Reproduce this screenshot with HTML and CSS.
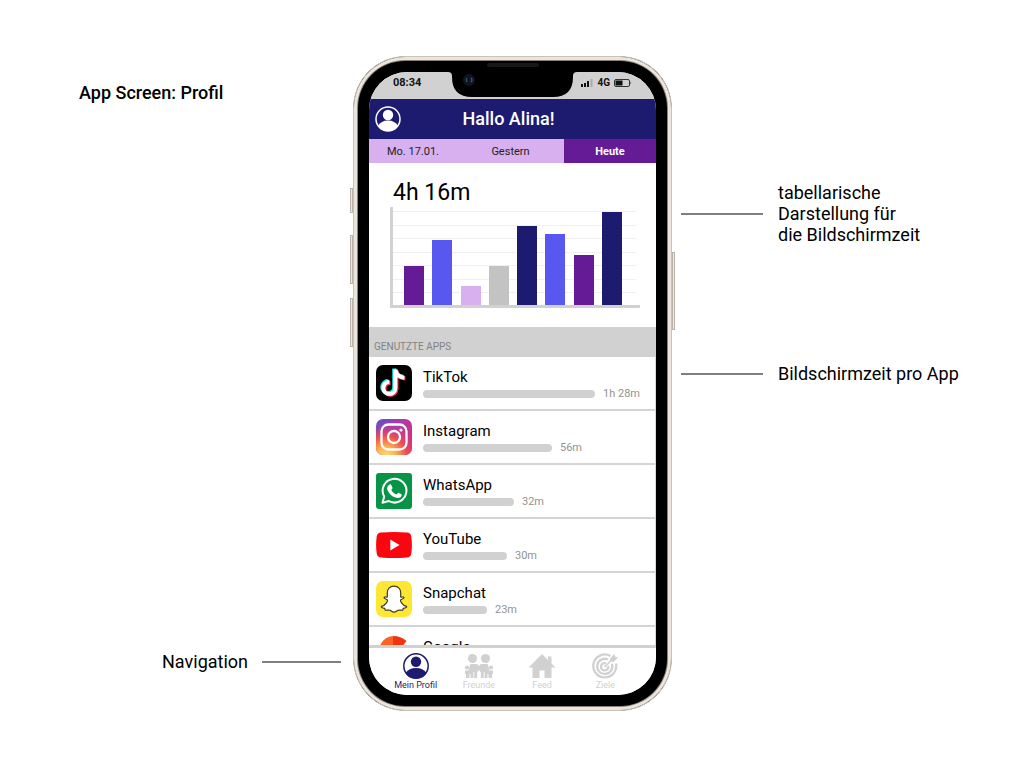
FILE: index.html
```html
<!DOCTYPE html>
<html lang="de">
<head>
<meta charset="utf-8">
<meta name="viewport" content="width=device-width, initial-scale=1">
<title>App Screen: Profil</title>
<link rel="stylesheet" href="styles.css">
</head>
<body>
<main class="board">
  <section class="side side-left">
    <h1 class="board-title">App Screen: Profil</h1>
    <div class="note note-left"><span class="note-text">Navigation</span><span class="leader"></span></div>
  </section>

  <div class="phone">
    <span class="key key-mute"></span>
    <span class="key key-up"></span>
    <span class="key key-down"></span>
    <span class="key key-power"></span>
    <span class="speaker"></span>
    <div class="screen">
      <div class="status">
        <span class="time">08:34</span>
        <svg class="notch" viewBox="0 0 129 26" aria-hidden="true">
          <path d="M0 0H129Q125 0 125 4V5Q125 25 105 25H24Q4 25 4 5V4Q4 0 0 0Z" fill="#000"/>
          <circle cx="21" cy="8" r="6" fill="#11141b"/>
          <path d="M19 6q-2 2 0 4" stroke="#286b72" fill="none"/>
          <path d="M23 6q2 2 0 4" stroke="#3150b8" fill="none" stroke-width="1.4"/>
        </svg>
        <span class="signals">
          <svg width="12" height="8" viewBox="0 0 12 8" aria-hidden="true"><path d="M0 5h2v3H0zM3 4h2v4H3zM6 2h2v6H6z" fill="#111"/><path d="M9.500 0h2v8h-2z" fill="#aaa"/></svg>
          <span>4G</span>
          <svg width="18" height="8" viewBox="0 0 18 8" aria-hidden="true"><rect x=".5" y=".5" width="15" height="7" rx="1.500" fill="none" stroke="#333"/><path d="M1.500 1.500h7v5h-7z" fill="#111"/><path d="M16.500 2.500q1.500 1.500 0 3z" fill="#333"/></svg>
        </span>
      </div>

      <header class="app-header">
        <button class="avatar" type="button" aria-label="Profil">
          <svg viewBox="0 0 26 26" aria-hidden="true"><circle cx="13" cy="13" r="12" fill="none" stroke="currentColor" stroke-width="1.500"/><circle cx="13" cy="9" r="5.200" fill="currentColor"/><path d="M3 20Q6 14.500 13 14.500T23 20Q19 25 13 25T3 20Z" fill="currentColor"/></svg>
        </button>
        <h2 class="greeting">Hallo Alina!</h2>
      </header>

      <div class="tabs">
        <button class="tab" type="button">Mo. 17.01.</button>
        <button class="tab" type="button">Gestern</button>
        <button class="tab tab-active" type="button">Heute</button>
      </div>

      <section class="usage">
        <p class="total">4h 16m</p>
        <div class="chart">
          <div class="grid-lines"><i></i><i></i><i></i><i></i><i></i><i></i><i></i></div>
          <span class="bar purple" style="height:39px"></span>
          <span class="bar blue" style="height:65px"></span>
          <span class="bar lilac" style="height:19px"></span>
          <span class="bar grey" style="height:39px"></span>
          <span class="bar navy" style="height:79px"></span>
          <span class="bar blue" style="height:71px"></span>
          <span class="bar purple" style="height:50px"></span>
          <span class="bar navy" style="height:93px"></span>
        </div>
      </section>

      <h3 class="list-title">GENUTZTE APPS</h3>
      <ul class="apps">
        <li class="app">
          <svg class="app-icon" viewBox="0 0 36 36" aria-hidden="true"><rect width="36" height="36" rx="7"/>
            <g fill="none" stroke-width="4"><path d="M18.500 4V22.500A6 6 0 1 1 12.500 16.500M18.500 4Q19.500 11.500 27.500 12.200" stroke="#25e5df" transform="translate(-.3 -.4)"/><path d="M18.500 4V22.500A6 6 0 1 1 12.500 16.500M18.500 4Q19.500 11.500 27.500 12.200" stroke="#f42b58" transform="translate(2 1.400)"/><path d="M18.500 4V22.500A6 6 0 1 1 12.500 16.500M18.500 4Q19.500 11.500 27.500 12.200" stroke="#fff" transform="translate(.9 .5)"/></g></svg>
          <div class="app-info"><span class="app-name">TikTok</span><span class="meter"><span class="track" style="width:172px"></span><span class="duration">1h 28m</span></span></div>
        </li>
        <li class="app">
          <svg class="app-icon" viewBox="0 0 36 36" aria-hidden="true">
            <defs><linearGradient id="ig-base" x1="0" y1="0" x2="1" y2=".6"><stop offset="0" stop-color="#5753c8"/><stop offset=".5" stop-color="#a83bb0"/><stop offset="1" stop-color="#d42d82"/></linearGradient><radialGradient id="ig-glow" cx=".28" cy="1.050" r=".95"><stop offset="0" stop-color="#ffdc75"/><stop offset=".28" stop-color="#fdb650"/><stop offset=".6" stop-color="#f0504b"/><stop offset="1" stop-color="#d23590" stop-opacity="0"/></radialGradient></defs>
            <rect width="36" height="36" rx="7" fill="url(#ig-base)"/><rect width="36" height="36" rx="7" fill="url(#ig-glow)"/>
            <g fill="none" stroke="#fff" stroke-width="2.300"><rect x="5.500" y="5.500" width="25" height="25" rx="7"/><circle cx="18" cy="18" r="6"/></g><circle cx="25" cy="11" r="1.600" fill="#fff"/></svg>
          <div class="app-info"><span class="app-name">Instagram</span><span class="meter"><span class="track" style="width:129px"></span><span class="duration">56m</span></span></div>
        </li>
        <li class="app">
          <svg class="app-icon" viewBox="0 0 36 36" aria-hidden="true"><rect width="36" height="36" rx="3" fill="#079447"/>
            <path d="M6.500 29.700l1.700-6.200A11.900 11.900 0 1 1 12.700 28z" fill="none" stroke="#fff" stroke-width="2" stroke-linejoin="round"/>
            <path d="M13.300 11.800c.8-.7 1.700-.5 2 .2l1.200 2.800c.2.700-.9 1.700-1.200 2.200 1.200 2.100 2.800 3.500 5.200 4.500.7-.5 1.400-1.900 2.100-1.700l2.800 1.400c.7.400-.1 2.500-.9 3.100-1.300 1-3 1-5 .3-3.700-1.200-6.600-4-8.100-7.600-.7-2-.1-3.800 1.900-5.200z" fill="#fff"/></svg>
          <div class="app-info"><span class="app-name">WhatsApp</span><span class="meter"><span class="track" style="width:91px"></span><span class="duration">32m</span></span></div>
        </li>
        <li class="app">
          <svg class="app-icon" viewBox="0 0 36 36" aria-hidden="true"><path d="M5 5.500Q18 4.500 31 5.500Q34.800 5.800 35.300 9.500Q36.500 18 35.300 26.500Q34.800 30.200 31 30.500Q18 31.500 5 30.500Q1.200 30.200.7 26.500Q-.5 18 .7 9.500Q1.200 5.800 5 5.500Z" fill="#fa0510"/><path d="M14.300 12.500v11l9.300-5.500z" fill="#fff"/></svg>
          <div class="app-info"><span class="app-name">YouTube</span><span class="meter"><span class="track" style="width:84px"></span><span class="duration">30m</span></span></div>
        </li>
        <li class="app">
          <svg class="app-icon" viewBox="0 0 36 36" aria-hidden="true"><rect width="36" height="36" rx="7" fill="#fde634"/>
            <path d="M18 5.200c-4.300 0-6.700 2.800-6.700 6.500v4.200c-.8.500-2-.2-2.800.2-.9.600-.4 1.400 2.700 2.600.9.700-.9 5.400-5.800 6.700-.5.900.7 1.500 3.300 2 .4.700.2 1.600.8 1.800 1.100.3 2.900-.6 4.500.1 1.300.6 2.100 1.900 4 1.900s2.700-1.300 4-1.900c1.600-.7 3.400.2 4.500-.1.600-.2.400-1.100.8-1.800 2.600-.5 3.800-1.100 3.300-2-4.900-1.300-6.700-6-5.800-6.700 3.100-1.200 3.600-2 2.700-2.600-.8-.4-2 .3-2.800-.2v-4.200c0-3.700-2.400-6.500-6.700-6.500z" fill="#fff" stroke="#3c3a20" stroke-width="1.200" stroke-linejoin="round"/></svg>
          <div class="app-info"><span class="app-name">Snapchat</span><span class="meter"><span class="track" style="width:64px"></span><span class="duration">23m</span></span></div>
        </li>
        <li class="app">
          <svg class="app-icon" viewBox="0 0 36 36" aria-hidden="true"><path d="M2 16Q6 1 18 1V11Q13 12 11 18Z" fill="#fb6226"/><path d="M17 1Q25 1 30.500 6L25 13Q22 10 17 11Z" fill="#ee350f"/></svg>
          <div class="app-info"><span class="app-name">Google</span></div>
        </li>
      </ul>

      <nav class="nav" aria-label="Navigation">
        <a class="nav-item nav-active" href="#profil">
          <svg class="nav-icon" viewBox="0 0 26 26" aria-hidden="true"><circle cx="13" cy="13" r="12.200" fill="none" stroke="currentColor" stroke-width="1.500"/><circle cx="13" cy="8.800" r="5.200" fill="currentColor"/><path d="M2.500 20Q6 15 13 15T23.500 20Q20 25.500 13 25.500T2.500 20Z" fill="currentColor"/></svg>
          Mein Profil
        </a>
        <a class="nav-item" href="#freunde">
          <svg class="nav-icon nav-wide" viewBox="0 0 30 26" aria-hidden="true"><g fill="currentColor"><circle cx="8.500" cy="5.500" r="4.500"/><circle cx="21.500" cy="5.500" r="4.500"/><circle cx="3" cy="14.500" r="2.100"/><circle cx="27" cy="14.500" r="2.100"/><path d="M1 17.500H4.500L6 12Q6.300 11 7.500 11H12Q14 11 15 13Q16 11 18 11H22.500Q23.700 11 24 12L25.500 17.500H29V21H28V25H24.500V21H23.500V25H16.800V19.500L15 17L13.200 19.500V25H6.500V21H5.500V25H2V21H1Z"/></g><path d="M9.800 19v6M20.200 19v6" stroke="#fff" stroke-width=".8"/></svg>
          Freunde
        </a>
        <a class="nav-item" href="#feed">
          <svg class="nav-icon nav-wide" viewBox="0 0 30 26" aria-hidden="true"><path d="M15 1L21 7V3.500H24.500V10.500L28.500 14.500H24.500V25H17.500V17.500H12.500V25H5.500V14.500H1.500Z" fill="currentColor"/></svg>
          Feed
        </a>
        <a class="nav-item" href="#ziele">
          <svg class="nav-icon" viewBox="0 0 26 26" aria-hidden="true"><g fill="none" stroke="currentColor" stroke-width="2.300"><path d="M18.500 3A11.500 11.500 0 1 0 24 10.500"/><path d="M16 6.500A7.600 7.600 0 1 0 20 11"/><path d="M14 10.300A3.700 3.700 0 1 0 16.300 13"/><path d="M12.500 14L21 5.500" stroke-width="1.700"/></g><path d="M18 5.500L22.500.8l.7 3 3 .7L21.500 9l-3-.5z" fill="currentColor"/></svg>
          Ziele
        </a>
      </nav>
    </div>
  </div>

  <section class="side side-right">
    <div class="note"><span class="leader"></span><span class="note-text">tabellarische<br>Darstellung für<br>die Bildschirmzeit</span></div>
    <div class="note"><span class="leader"></span><span class="note-text">Bildschirmzeit pro App</span></div>
  </section>
</main>
</body>
</html>
```
FILE: styles.css
```css
* { box-sizing: border-box; }

body {
  margin: 0;
  background: #fff;
  color: #000;
  font-family: Roboto, "Liberation Sans", sans-serif;
}

h1, h2, h3, p, ul { margin: 0; padding: 0; }
button { border: 0; padding: 0; font: inherit; color: inherit; background: none; }
svg { display: block; }

/* Board with annotations on both sides of the device */
.board {
  display: grid;
  grid-template-columns: 353fr 319px 352fr;
  min-height: 100vh;
  padding: 56px 0;
  align-items: start;
}
.side { display: flex; flex-direction: column; font-size: 18px; line-height: 21px; }
.side-left { padding: 26px 12px 0 79px; gap: 548px; }
.side-right { padding: 126px 0 0 9px; gap: 118px; }
.board-title { font-size: 18px; line-height: 21px; font-weight: 500; }
.note { display: flex; align-items: center; gap: 15px; }
.note-left { justify-content: flex-end; gap: 14px; }
.leader { flex: none; width: 82px; height: 2px; background: #808080; }
.note-left .leader { width: 79px; }

/* Device */
.phone {
  position: relative;
  padding: 15px;
  background: #000;
  border: 1px solid #c9c2ba;
  border-radius: 52px;
  box-shadow: inset 0 0 0 3px #ebe5de, inset 0 0 0 4px #8a827a;
}
.key {
  position: absolute;
  width: 3px;
  background: #eee8e1;
  border: 1px solid #bbb3aa;
}
.key-mute { left: -4px; top: 131px; height: 25px; }
.key-up { left: -4px; top: 178px; height: 49px; }
.key-down { left: -4px; top: 241px; height: 49px; }
.key-power { right: -4px; top: 195px; height: 78px; }
.speaker {
  position: absolute;
  top: 6px;
  left: 50%;
  width: 52px;
  height: 4px;
  margin-left: -26px;
  border-radius: 2px;
  background: #161817;
}
.screen {
  display: flex;
  flex-direction: column;
  height: 623px;
  overflow: hidden;
  background: #fff;
  border-radius: 38px;
}

.status {
  position: relative;
  display: flex;
  align-items: flex-start;
  justify-content: space-between;
  height: 27px;
  padding: 3px 24px 0;
  background: #d1d1d1;
  font-size: 11px;
  line-height: 15px;
  font-weight: 700;
  color: #111;
}
.notch { position: absolute; top: 0; left: 79px; width: 129px; height: 26px; }
.signals { display: flex; align-items: center; gap: 4px; font-size: 10px; }

.app-header {
  display: grid;
  grid-template-columns: 26px 1fr 26px;
  align-items: center;
  height: 40px;
  padding: 0 14px 0 6px;
  background: #1c1b6f;
  color: #fff;
}
.avatar { width: 26px; height: 26px; }
.greeting { font-size: 18px; line-height: 22px; font-weight: 500; text-align: center; }

.tabs { display: grid; grid-template-columns: 88fr 107fr 92fr; height: 24px; }
.tab { padding-top: 1px; background: #d8b0ef; color: #222; font-size: 11px; line-height: 14px; }
.tab-active { background: #651a96; color: #fff; font-weight: 700; }

.usage { padding: 15px 16px 19px 21px; }
.total { padding-left: 3px; font-size: 23px; line-height: 29px; }
.chart {
  position: relative;
  display: flex;
  align-items: flex-end;
  justify-content: space-between;
  height: 101px;
  padding: 0 18px 0 11px;
  border-left: 3px solid #d1d1d1;
  border-bottom: 3px solid #d1d1d1;
  border-radius: 1px;
}
.grid-lines {
  position: absolute;
  inset: 4px 4px 12px 0;
  display: flex;
  flex-direction: column;
  justify-content: space-between;
}
.grid-lines i { height: 1px; background: #f0f0f0; }
.bar { position: relative; width: 20px; }
.purple { background: #651a96; }
.blue { background: #5858f0; }
.lilac { background: #d8b0ef; }
.grey { background: #c3c3c3; }
.navy { background: #1c1b6f; }

.list-title {
  height: 30px;
  padding: 13px 5px 0;
  background: #d1d1d1;
  color: #828282;
  font-size: 10px;
  line-height: 14px;
  font-weight: 400;
}
.apps {
  flex: 1;
  min-height: 0;
  overflow: hidden;
  list-style: none;
  border-right: 1px solid #d8d8d8;
}
.app {
  display: flex;
  gap: 11px;
  height: 54px;
  padding: 8px 7px 0;
  border-bottom: 2px solid #d4d4d4;
}
.app-icon { flex: none; width: 36px; height: 36px; }
.app-info { display: flex; flex-direction: column; padding-top: 3px; }
.app-name { font-size: 15px; line-height: 18px; }
.meter { display: flex; align-items: center; gap: 8px; height: 16px; }
.track { height: 8px; border-radius: 4px; background: #d1d1d1; }
.duration { font-size: 11px; line-height: 16px; color: #929292; }

.nav {
  display: grid;
  grid-template-columns: repeat(4, 1fr);
  height: 50px;
  padding: 5px 19px 0 15px;
  border-top: 3px solid #d1d1d1;
  background: #fff;
}
.nav-item {
  display: flex;
  flex-direction: column;
  align-items: center;
  color: #d1d1d1;
  font-size: 9px;
  line-height: 13px;
  text-decoration: none;
  white-space: nowrap;
}
.nav-active { color: #1c1b6f; }
.nav-icon { width: 26px; height: 26px; }
.nav-wide { width: 30px; }
```
